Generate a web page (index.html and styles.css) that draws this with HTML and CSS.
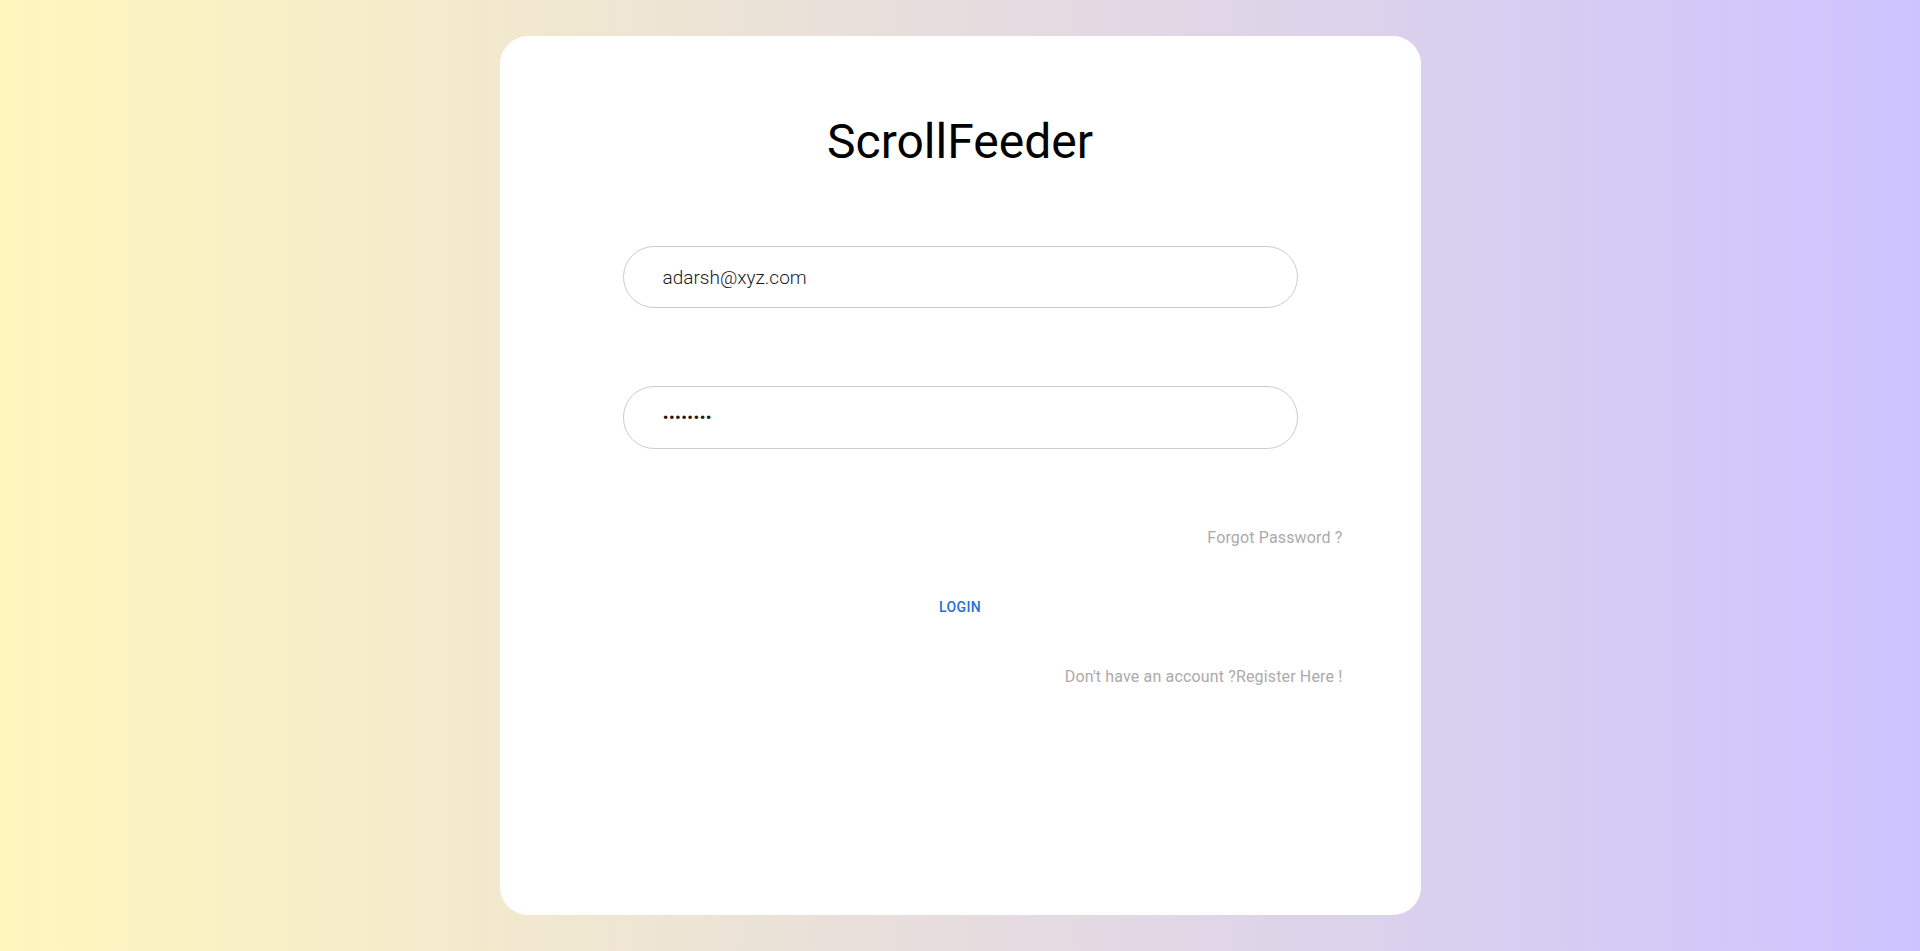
FILE: index.html
```html
<!DOCTYPE html>
<html lang="en">
<head>
<meta charset="utf-8">
<title>ScrollFeeder</title>
<link rel="stylesheet" href="styles.css">
</head>
<body>
<main class="page">
  <section class="card">
    <h1 class="title">ScrollFeeder</h1>
    <form class="form">
      <input class="field" type="email" value="adarsh@xyz.com">
      <input class="field field-second" type="password" value="password">
      <div class="link-row forgot"><a class="muted-link" href="#">Forgot Password ?</a></div>
      <button class="login-btn" type="button">Login</button>
      <div class="link-row register"><a class="muted-link" href="#">Don't have an account ?Register Here !</a></div>
    </form>
  </section>
</main>
</body>
</html>
```
FILE: styles.css
```css
* { box-sizing: border-box; }
html, body {
  margin: 0;
  padding: 0;
  height: 100%;
}
body {
  font-family: Roboto, "Liberation Sans", sans-serif;
  background: linear-gradient(to right, #fff6bd 0%, #cdc3ff 100%);
  overflow: hidden;
}
.page {
  height: 951px;
  display: flex;
  justify-content: center;
  padding-top: 36px;
}
.card {
  width: 921px;
  height: 879px;
  background: #fff;
  border-radius: 28px;
  display: flex;
  flex-direction: column;
  align-items: center;
  padding-top: 78px;
}
.title {
  margin: 0;
  font-size: 48px;
  font-weight: 400;
  line-height: 56.25px;
  color: #000;
}
.form {
  width: 100%;
  display: flex;
  flex-direction: column;
  align-items: center;
  margin-top: 76px;
}
.field {
  width: 675px;
  height: 62px;
  border: 1px solid #cccccc;
  border-radius: 31px;
  padding: 0 20px 0 39px;
  font-family: Roboto, "Liberation Sans", sans-serif;
  font-size: 19px;
  font-weight: 300;
  color: #1a1a1a;
  background: #fff;
  outline: none;
}
.field-second {
  margin-top: 78px;
  height: 63px;
}
.link-row {
  width: 100%;
  display: flex;
  justify-content: flex-end;
  padding-right: 78px;
  font-size: 16px;
  line-height: 18.75px;
  letter-spacing: 0.15px;
}
.forgot { margin-top: 80px; }
.register { margin-top: 42px; }
.muted-link {
  color: #adaaa9;
  text-decoration: none;
}
.login-btn {
  margin-top: 41px;
  border: none;
  background: transparent;
  padding: 6px 8px;
  font-family: Roboto, "Liberation Sans", sans-serif;
  font-size: 14px;
  font-weight: 500;
  line-height: 24.5px;
  letter-spacing: 0.4px;
  text-transform: uppercase;
  color: #1f6fd6;
  border-radius: 4px;
  cursor: pointer;
}
```
